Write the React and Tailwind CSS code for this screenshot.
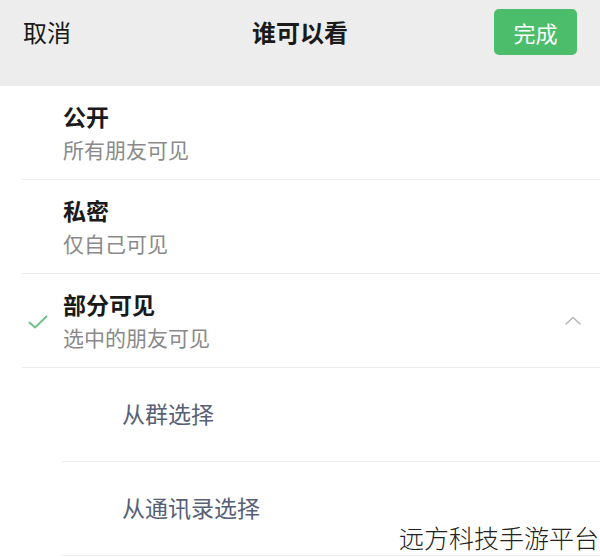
import React from 'react';

const font = { fontFamily: '"Noto Sans CJK SC", "Noto Sans", sans-serif' };

function Option({ title, desc, checked, expanded }) {
  return (
    <div className="ml-[22px] h-[94px] border-b border-[#ececec] flex items-center relative">
      {checked && (
        <svg className="absolute left-[6px] top-[41px]" width="20" height="14" viewBox="0 0 20 14" fill="none">
          <path d="M1.5 7.5 L7 12.5 L18.5 1.5" stroke="#6cbf86" strokeWidth="1.8" strokeLinecap="round" strokeLinejoin="round" />
        </svg>
      )}
      <div className="pl-[41px] flex-1">
        <div className="text-[23px] leading-[30px] font-bold text-[#1a1a1a]">{title}</div>
        <div className="text-[21px] leading-[30px] mt-[3px] text-[#8a8a8a]">{desc}</div>
      </div>
      {expanded && (
        <svg className="mr-[19px]" width="16" height="9" viewBox="0 0 16 9" fill="none">
          <path d="M1 8 L8 1.5 L15 8" stroke="#b5b5b5" strokeWidth="1.5" strokeLinecap="round" strokeLinejoin="round" />
        </svg>
      )}
    </div>
  );
}

function SubOption({ label }) {
  return (
    <div className="ml-[62px] h-[94px] border-b border-[#ececec] flex items-center pl-[60px] pb-[3px]">
      <span className="text-[23px] text-[#566076]">{label}</span>
    </div>
  );
}

export default function App() {
  return (
    <div className="w-[600px] h-[557px] bg-white overflow-hidden relative" style={font}>
      <div className="h-[86px] bg-[#ededed] px-[23px] pt-[9px]">
        <div className="h-[46px] flex items-center justify-between">
          <span className="text-[24px] text-[#1a1a1a] w-[83px]">取消</span>
          <span className="text-[24px] font-bold text-[#1a1a1a]">谁可以看</span>
          <button className="w-[83px] h-[46px] rounded-[5px] bg-[#4cbe6b] text-white text-[22px]">完成</button>
        </div>
      </div>
      <Option title="公开" desc="所有朋友可见" />
      <Option title="私密" desc="仅自己可见" />
      <Option title="部分可见" desc="选中的朋友可见" checked expanded />
      <SubOption label="从群选择" />
      <SubOption label="从通讯录选择" />
      <div className="absolute right-[1px] bottom-[5px] text-[25px] leading-[30px] text-[#222] font-light">
        远方科技手游平台
      </div>
    </div>
  );
}
